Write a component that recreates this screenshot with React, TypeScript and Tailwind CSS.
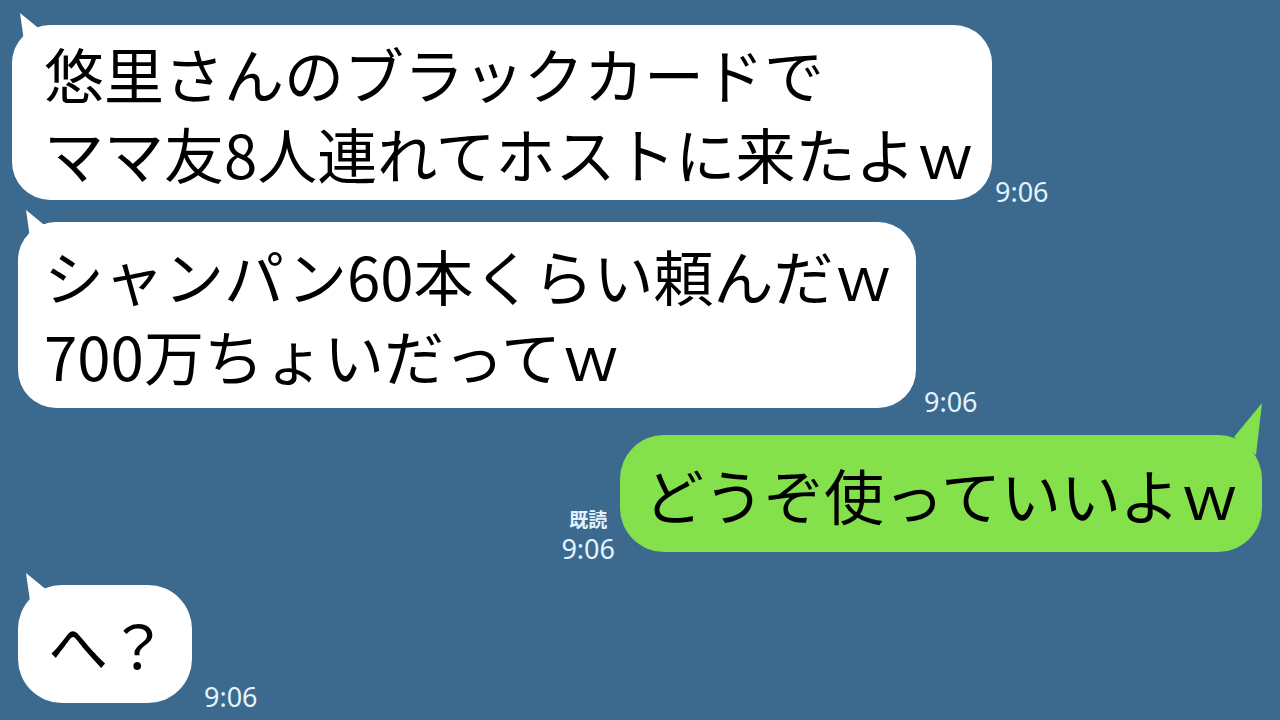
const jp = "font-['Noto_Sans_CJK_JP',sans-serif]";
const time = "font-['Noto_Sans','Noto_Sans_CJK_JP',sans-serif] text-[27px] leading-none text-[#e2f4ff]";

function LeftTail() {
  return (
    <svg className="absolute left-0 top-[-12px]" width="40" height="40" viewBox="0 0 40 40">
      <polygon points="8,0 12,28 30,18" fill="#ffffff" />
    </svg>
  );
}

export default function App() {
  return (
    <div className={`h-screen w-full overflow-hidden bg-[#3b6a8e] ${jp}`}>
      <div className="flex flex-col pt-[25px]">
        {/* 1 */}
        <div className="flex items-end pl-[12px]">
          <div className="relative flex h-[175px] w-[980px] flex-col justify-center rounded-[38px] bg-white pl-[32px] text-[60px] leading-[80px] text-black">
            <LeftTail />
            <div className="relative">悠里さんのブラックカードで</div>
            <div className="relative">ママ友8人連れてホストに来たよｗ</div>
          </div>
          <span className={`${time} ml-[3px] translate-y-[5px]`}>9:06</span>
        </div>

        {/* 2 */}
        <div className="mt-[22px] flex items-end pl-[18px]">
          <div className="relative flex h-[186px] w-[898px] flex-col justify-center rounded-[38px] bg-white pl-[26px] text-[60px] leading-[80px] text-black">
            <LeftTail />
            <div className="relative">シャンパン60本くらい頼んだｗ</div>
            <div className="relative">700万ちょいだってｗ</div>
          </div>
          <span className={`${time} ml-[8px] translate-y-[7px]`}>9:06</span>
        </div>

        {/* 3 */}
        <div className="mt-[27px] flex items-end justify-end pr-[18px]">
          <div className="mr-[5px] flex translate-y-[10px] flex-col items-center">
            <span className="text-[19px] font-bold leading-none text-[#e2f4ff]">既読</span>
            <span className={`${time} mt-[7px]`}>9:06</span>
          </div>
          <div className="relative flex h-[117px] w-[642px] items-center rounded-[44px] bg-[#84e04b] pl-[24px] text-[60px] leading-none text-black">
            <svg className="absolute right-0 top-[-32px]" width="40" height="56" viewBox="0 0 40 56">
              <polygon points="40,0 12,34 34,52" fill="#84e04b" />
            </svg>
            <span className="relative">どうぞ使っていいよｗ</span>
          </div>
        </div>

        {/* 4 */}
        <div className="mt-[33px] flex items-end pl-[18px]">
          <div className="relative flex h-[118px] w-[174px] items-center rounded-[44px] bg-white pl-[30px] text-[60px] leading-none text-black">
            <LeftTail />
            <span className="relative">へ？</span>
          </div>
          <span className={`${time} ml-[12px] translate-y-[7px]`}>9:06</span>
        </div>
      </div>
    </div>
  );
}
